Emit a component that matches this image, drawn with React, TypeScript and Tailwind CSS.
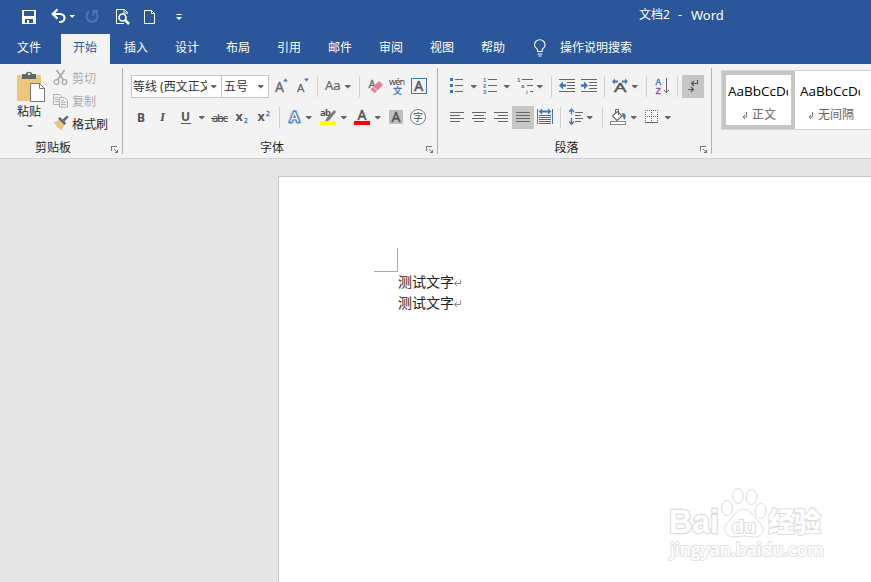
import React from "react";

const gray = "#666666";
const blue = "#3f78b5";

type IconProps = {
   w: number;
   h?: number;
   className?: string;
   crisp?: boolean;
   children?: React.ReactNode;
};

const Icon = ({ w, h = 23, className = "", crisp = false, children }: IconProps) => (
   <svg
      width={w}
      height={h}
      viewBox={`0 0 ${w} ${h}`}
      fill="none"
      shapeRendering={crisp ? "crispEdges" : "auto"}
      className={`block shrink-0 ${className}`}
   >
      {children}
   </svg>
);

const Caret = ({ className = "" }: { className?: string }) => (
   <Icon w={6} h={23} className={className}>
      <path d="M0 10h5.500v1L2.800 13.500 0 11z" fill={gray} />
   </Icon>
);

const Sep = ({ className = "" }: { className?: string }) => (
   <div className={`w-px h-[21px] mt-px shrink-0 bg-[#d0d0d0] ${className}`}></div>
);

const Launcher = () => (
   <Icon w={8} h={8} crisp className="absolute right-[3px] bottom-0">
      <path d="M0.5 5V0.5H6M3 3l3 3" stroke="#777" />
      <path d="M7 3v4H3z" fill="#777" />
   </Icon>
);

const Group = ({ title, className, children }: { title: string; className: string; children: React.ReactNode }) => (
   <div className={`relative flex flex-col h-[86px] mt-1 shrink-0 border-r border-[#b1b1b1] ${className}`}>
      <div className="h-[70px]">{children}</div>
      <div className="h-4 pr-4 text-center leading-[19px] text-[#262626]">{title}</div>
      <Launcher />
   </div>
);

const Lines = ({ rows }: { rows: number[][] }) => (
   <>
      {rows.map(([x, y, w], i) => (
         <rect key={i} x={x} y={y} width={w} height={1} fill={gray} />
      ))}
   </>
);

const tabs = ["插入", "设计", "布局", "引用", "邮件", "审阅", "视图", "帮助"];

const TitleBar = () => (
   <div className="flex h-[34px] text-white">
      <Icon w={14} h={34} crisp className="ml-[22px]">
         <path d="M0 10h14v14H0zM2 11v5h10v-5zM3 19v4h2v-3h2v3h4v-4z" fill="#fff" fillRule="evenodd" />
      </Icon>
      <Icon w={15} h={34} className="ml-[15px]">
         <path d="M1.5 14h7.5c6 0 6 8 0 8H8" stroke="#fff" strokeWidth="2.2" />
         <path d="M6.5 9.3L1.7 14l4.8 4.6" stroke="#fff" strokeWidth="2.2" />
      </Icon>
      <Icon w={6} h={34} className="ml-[3px]">
         <path d="M0.5 15h5.500L3.200 18z" fill="#fff" />
      </Icon>
      <Icon w={14} h={34} className="ml-[10px]">
         <path d="M4 11.6a5.6 5.6 0 1 0 6.5 0.2" stroke="#5377ae" strokeWidth="2" />
         <path d="M8.5 15.5V11H13" stroke="#5377ae" strokeWidth="2" />
      </Icon>
      <Icon w={15} h={34} className="ml-[16px]">
         <path d="M12.5 13.5v-1L9.5 9.500H1.500v14H9" stroke="#fff" />
         <path d="M9 9v4h4" stroke="#fff" />
         <circle cx="7.500" cy="17.500" r="3.500" stroke="#fff" strokeWidth="1.700" />
         <path d="M10 20l4 4" stroke="#fff" strokeWidth="2.500" />
      </Icon>
      <Icon w={12} h={34} className="ml-[14px]">
         <path d="M0.500 10.500h7l3 3v10h-10zM7.500 10.500v3h3" stroke="#fff" />
      </Icon>
      <Icon w={6} h={34} className="ml-[20px]">
         <path d="M0.500 14h5v1h-5zM0 17h6l-3 3z" fill="#fff" />
      </Icon>
      <div className="ml-[457px] pt-[5px] flex leading-5 text-[12.5px]">
         <span className="w-[39px] text-[12px]">文档2</span>
         <span className="w-[13px]">-</span>
         <span className="text-[13px]">Word</span>
      </div>
   </div>
);

const TabBar = () => (
   <div className="flex h-[30px] leading-[28px] text-white">
      <div className="w-[61px] pl-[17px]">文件</div>
      <div className="w-[49px] pl-3 bg-[#f3f3f3] text-[#2b579a]">开始</div>
      {tabs.map((t) => (
         <div key={t} className="w-[51px] pl-[14px]">{t}</div>
      ))}
      <Icon w={14} h={30} className="ml-[15px]">
         <path d="M4.500 17.500v-2C2.500 14 1.500 12.800 1.500 11a5.300 5.300 0 0 1 10.600 0c0 1.800-1 3-3 4.500v2z" stroke="#fff" strokeWidth="1.100" />
         <path d="M4.500 20h5M5.500 22h3" stroke="#fff" />
      </Icon>
      <div className="ml-[13px]">操作说明搜索</div>
   </div>
);

const Clipboard = () => (
   <Group title="剪贴板" className="w-[123px]">
      <div className="flex">
         <div className="w-[30px] ml-[16px] flex flex-col">
            <Icon w={30} h={35}>
               <rect x="1" y="7" width="24" height="26" rx="1" fill="#edc57c" />
               <path d="M6 11V6h4c0-3 6-3 6 0h4v5z" fill="#666" />
               <rect x="12" y="5" width="2" height="2" fill="#f3f3f3" />
               <path d="M14.500 15.500h9l5 5v13h-14z" fill="#fff" stroke="#777" />
               <path d="M23.500 15.500v5h5" stroke="#777" />
            </Icon>
            <span className="leading-[18px] ml-px whitespace-nowrap text-[#262626]">粘贴</span>
            <Icon w={6} h={6} className="ml-[11px]">
               <path d="M0 4h6L3 7z" fill={gray} />
            </Icon>
         </div>
         <div className="ml-[7px] flex flex-col leading-[21px] text-[#ababab]">
            <div className="flex h-[23px]">
               <Icon w={15} h={23}>
                  <path d="M3.500 2l7 10M11.500 2L4.500 12" stroke="#aaa" strokeWidth="1.800" />
                  <circle cx="3.500" cy="14" r="2.300" stroke="#aaa" strokeWidth="1.300" />
                  <circle cx="11.500" cy="14" r="2.300" stroke="#aaa" strokeWidth="1.300" />
               </Icon>
               <span className="ml-1">剪切</span>
            </div>
            <div className="flex h-[23px]">
               <Icon w={15} h={23}>
                  <path d="M0.500 3.500h6l2 2v8h-8z" stroke="#b8a9b8" />
                  <path d="M2 6.500h3M2 8.500h4M2 10.500h4" stroke="#b8a9b8" />
                  <path d="M6.500 6.500h5l3 3v6.500h-8z" fill="#f3f3f3" stroke="#b8a9b8" />
                  <path d="M8 9.500h3M8 11.500h5M8 13.500h5" stroke="#b8a9b8" />
               </Icon>
               <span className="ml-1">复制</span>
            </div>
            <div className="flex h-[23px] text-[#262626]">
               <Icon w={16} h={23}>
                  <path d="M0.500 8.500L7 5.500l5 5L8 16.500z" fill="#edc57c" />
                  <path d="M5 4.500l2-1.500 6 6-1.500 2z" fill="#666" />
                  <path d="M9.500 5.500l4.500-4 1.500 1.500-4 4.500z" fill="#666" />
               </Icon>
               <span className="ml-[3px]">格式刷</span>
            </div>
         </div>
      </div>
   </Group>
);

const FontGroup = () => (
   <Group title="字体" className="w-[315px]">
      <div className="flex h-[38px] pt-[7px] pl-[8px]">
         <div className="flex w-[91px] h-[23px] border border-[#c6c6c6] bg-white leading-[21px] text-[#333]">
            <div className="w-[75px] pl-px overflow-hidden whitespace-nowrap">等线 (西文正文)</div>
            <Caret className="ml-[4px] -mt-px" />
         </div>
         <div className="flex w-[47px] h-[23px] border border-l-0 border-[#c6c6c6] bg-white leading-[21px] text-[#333]">
            <div className="w-[36px] pl-[2px]">五号</div>
            <Caret className="-mt-px" />
         </div>
         <Icon w={14} className="ml-[6px]">
            <text x="0" y="17" fontSize="14" fill={gray} stroke={gray} strokeWidth="0.3">A</text>
            <path d="M8 6.500h5L10.500 3.500z" fill={blue} />
         </Icon>
         <Icon w={13} className="ml-[8px]">
            <text x="0" y="17" fontSize="11.500" fill={gray} stroke={gray} strokeWidth="0.300">A</text>
            <path d="M7 3.500h5l-2.500 3z" fill={blue} />
         </Icon>
         <Sep className="ml-[7px]" />
         <Icon w={18} className="ml-[6px]">
            <text x="1" y="15" fontSize="13" fill={gray} stroke={gray} strokeWidth="0.200">Aa</text>
         </Icon>
         <Caret className="ml-[3px]" />
         <Sep className="ml-[8px]" />
         <Icon w={17} className="ml-[8px]">
            <text x="0.500" y="13" fontSize="11" fill={gray} stroke={gray} strokeWidth="0.300">A</text>
            <path d="M3 13.500L11 6l4 4-8 8-4-3z" fill="#e57f92" />
            <path d="M5 11.500l4.500 4.500" stroke="#f3f3f3" />
         </Icon>
         <Icon w={18} className="ml-[4px]">
            <text x="0" y="10" fontSize="9" textLength="16" fill="#444">wén</text>
            <text x="4" y="19" fontSize="9" fill={blue} stroke={blue} strokeWidth="0.300">文</text>
         </Icon>
         <Icon w={16} className="ml-[4px]">
            <rect x="0.500" y="3.500" width="15" height="15" stroke={blue} />
            <text x="3.200" y="16" fontSize="14" fill="#555" stroke="#555" strokeWidth="0.500">A</text>
         </Icon>
      </div>
      <div className="flex h-[23px] pl-[13px]">
         <div className="w-[23px] leading-[23px] font-bold text-[12px] text-[#555]"><span className="ml-px">B</span></div>
         <div className="w-[22px] leading-[22px] font-semibold italic text-[#555] font-['Liberation_Serif']"><span className="ml-px text-[13px]">I</span></div>
         <Icon w={11}>
            <text x="0" y="15" fontSize="12" fontWeight="bold" fill="#555">U</text>
            <rect x="0" y="17" width="10" height="1" fill="#555" />
         </Icon>
         <Caret className="ml-[7px]" />
         <Icon w={19} className="ml-[6px]">
            <text x="1" y="16" fontSize="11" textLength="16" fill="#555" stroke="#555" strokeWidth="0.200">abc</text>
            <rect x="0" y="12" width="17" height="1" fill="#555" />
         </Icon>
         <Icon w={15} className="ml-[5px]">
            <text x="0.500" y="15" fontSize="12.500" fontWeight="bold" fill="#555">x</text>
            <text x="9" y="17" fontSize="6.500" fill={blue} stroke={blue} strokeWidth="0.300">2</text>
         </Icon>
         <Icon w={15} className="ml-[7px]">
            <text x="0.500" y="15" fontSize="12.500" fontWeight="bold" fill="#555">x</text>
            <text x="9" y="9.500" fontSize="6.500" fill={blue} stroke={blue} strokeWidth="0.300">2</text>
         </Icon>
         <Sep className="ml-[7px]" />
         <Icon w={16} className="ml-[7px]">
            <text x="3" y="16" fontSize="14" fill="#fff" stroke="#a9c9ea" strokeWidth="4.500" paintOrder="stroke" strokeLinejoin="round">A</text>
            <text x="3" y="16" fontSize="14" fill="#fff" stroke={blue} strokeWidth="2.200" paintOrder="stroke">A</text>
         </Icon>
         <Caret className="ml-[3px]" />
         <Icon w={17} className="ml-[8px]">
            <text x="0" y="10" fontSize="9.500" fontWeight="bold" textLength="11" fill="#555">ab</text>
            <path d="M14.500 4L7 11.500l-2 4 4-1L16 6z" fill="#777" />
            <rect x="0" y="15" width="16" height="4" fill="#ffff00" />
         </Icon>
         <Caret className="ml-[4px]" />
         <Icon w={17} className="ml-[7px]">
            <text x="3.500" y="14" fontSize="14" fill="#555" stroke="#555" strokeWidth="0.500">A</text>
            <rect x="0" y="15" width="16" height="4" fill="#ff0000" />
         </Icon>
         <Caret className="ml-[4px]" />
         <Icon w={14} className="ml-[8px]">
            <rect x="0" y="4" width="14" height="14" fill="#bfbfbf" />
            <text x="2.500" y="16" fontSize="14" fill="#555" stroke="#555" strokeWidth="0.500">A</text>
         </Icon>
         <Icon w={17} className="ml-[7px]">
            <circle cx="8" cy="11" r="7.500" fill="#fff" stroke="#777" />
            <text x="3" y="14.700" fontSize="10" fill="#444">字</text>
         </Icon>
      </div>
   </Group>
);

const ParagraphGroup = () => (
   <Group title="段落" className="w-[274px]">
      <div className="flex h-[38px] pt-[7px] pl-[12px]">
         <Icon w={14} crisp>
            <path d="M0 3h3v3H0zM0 9h3v3H0zM0 15h3v3H0z" fill={blue} />
            <Lines rows={[[5, 4, 8], [5, 10, 8], [5, 16, 8]]} />
         </Icon>
         <Caret className="ml-[7px]" />
         <Icon w={15} className="ml-[6px]">
            <g fontSize="6" fontWeight="bold" fill={blue} fontFamily="Liberation Sans">
               <text x="0" y="6.500">1</text>
               <text x="0" y="12.500">2</text>
               <text x="0" y="18.500">3</text>
            </g>
            <Lines rows={[[5, 4, 9], [5, 10, 9], [5, 16, 9]]} />
         </Icon>
         <Caret className="ml-[6px]" />
         <Icon w={17} className="ml-[7px]">
            <g fontSize="6" fontWeight="bold" fill={blue} fontFamily="Liberation Sans">
               <text x="0" y="6.500">1</text>
               <text x="4" y="12.500">a</text>
               <text x="9" y="18.500">i</text>
            </g>
            <Lines rows={[[5, 4, 11], [10, 10, 6], [13, 16, 3]]} />
         </Icon>
         <Caret className="ml-[3px]" />
         <Sep className="ml-[8px]" />
         <Icon w={16} className="ml-[7px]">
            <Lines rows={[[0, 4, 16], [8, 7, 8], [8, 10, 8], [8, 13, 8], [0, 16, 16]]} />
            <path d="M0 10.500L4 6.500v2.800h3v2.400H4v2.800z" fill={blue} />
         </Icon>
         <Icon w={16} className="ml-[6px]">
            <Lines rows={[[0, 4, 16], [8, 7, 8], [8, 10, 8], [8, 13, 8], [0, 16, 16]]} />
            <path d="M7 10.500L3 6.500v2.800H0v2.400h3v2.800z" fill={blue} />
         </Icon>
         <Sep className="ml-[7px]" />
         <Icon w={17} className="ml-[7px]">
            <path d="M0 6.500l3-3v2h3v2H3v2zM16 6.500l-3-3v2h-3v2h3v2z" fill={blue} />
            <text x="2" y="17" fontSize="12" textLength="12.500" lengthAdjust="spacingAndGlyphs" fill="#555" stroke="#555" strokeWidth="0.400">A</text>
         </Icon>
         <Caret className="ml-[3px]" />
         <Sep className="ml-[8px]" />
         <Icon w={15} className="ml-[8px]">
            <text x="0.500" y="9.500" fontSize="8.500" fill={blue} stroke={blue} strokeWidth="0.400" fontFamily="Liberation Sans">A</text>
            <text x="0.800" y="18.500" fontSize="8.500" fill="#8b55ad" stroke="#8b55ad" strokeWidth="0.400" fontFamily="Liberation Sans">Z</text>
            <path d="M11.500 3v14.500M9 15l2.500 2.700L14 15" stroke={gray} />
         </Icon>
         <Sep className="ml-[7px]" />
         <div className="w-[22px] h-[23px] ml-[4px] bg-[#c6c6c6]">
            <Icon w={22}>
               <path d="M15.500 5v3.500H9.500M12 6L9.500 8.500 12 11" stroke="#555" strokeWidth="1.200" />
               <path d="M6 14.500h5M9 12l2.500 2.500L9 17" stroke="#555" strokeWidth="1.200" />
            </Icon>
         </div>
      </div>
      <div className="flex h-[23px] pl-[12px]">
         <Icon w={14} crisp><Lines rows={[[0, 6, 14], [0, 9, 10], [0, 12, 14], [0, 15, 10]]} /></Icon>
         <Icon w={14} crisp className="ml-[8px]"><Lines rows={[[0, 6, 14], [2, 9, 10], [0, 12, 14], [2, 15, 10]]} /></Icon>
         <Icon w={14} crisp className="ml-[8px]"><Lines rows={[[0, 6, 14], [4, 9, 10], [0, 12, 14], [4, 15, 10]]} /></Icon>
         <div className="w-[22px] h-[23px] ml-[4px] pl-[4px] bg-[#c6c6c6]">
            <Icon w={14} crisp><Lines rows={[[0, 6, 14], [0, 9, 14], [0, 12, 14], [0, 15, 14]]} /></Icon>
         </div>
         <Icon w={16} className="ml-[3px]">
            <path d="M0 3h1v15H0zM15 3h1v15h-1zM1.500 5.500L5 2.500v2h6v-2l3.500 3-3.500 3v-2H5v2z" fill={blue} />
            <Lines rows={[[2, 9, 12], [2, 11, 12], [2, 13, 12], [2, 15, 12], [2, 17, 12]]} />
         </Icon>
         <Sep className="ml-[7px]" />
         <Icon w={15} className="ml-[8px]">
            <path d="M2.500 3.500v5M0 6l2.500-2.700L5 6M2.500 12v6M0 15.500l2.500 2.700L5 15.500" stroke={blue} strokeWidth="1.300" />
            <Lines rows={[[6, 6, 8], [6, 9, 6], [6, 12, 8], [6, 15, 6]]} />
         </Icon>
         <Caret className="ml-[3px]" />
         <Sep className="ml-[9px]" />
         <Icon w={17} className="ml-[7px]">
            <path d="M2.500 10l5-4.500 4.500 4.500-5 4.500z" fill="#fff" stroke={gray} strokeWidth="1.100" />
            <path d="M5.500 8V3.500h3V9" stroke={gray} />
            <path d="M12 7c4 0 4.500 3 2.500 7l-2-4z" fill={blue} />
            <rect x="0.500" y="15.500" width="15" height="3" fill="#fff" stroke="#888" />
         </Icon>
         <Caret className="ml-[4px]" />
         <Icon w={13} crisp className="ml-[8px]">
            <rect x="0" y="4" width="13" height="13" fill="#fff" />
            <path d="M0 4.500h13M0 10.500h13M0.500 4v12M6.500 4v12M12.500 4v12" stroke={gray} strokeDasharray="1 1" />
            <rect x="0" y="16" width="13" height="1" fill={gray} />
         </Icon>
         <Caret className="ml-[7px]" />
      </div>
   </Group>
);

const StyleCard = ({ name, active }: { name: string; active?: boolean }) => (
   <div className={`w-[73px] h-[58px] shrink-0 border-4 ${active ? "border-[#c6c6c6]" : "border-transparent -ml-px"}`}>
      <div className="w-[62px] pl-[2px] pt-[6px] overflow-hidden whitespace-nowrap text-[13.5px] leading-[20px] text-black font-['Open_Sans','Noto_Sans_CJK_SC',sans-serif]">
         AaBbCcDd
      </div>
      <div className="flex justify-center pl-px leading-[27px] text-[#666] whitespace-nowrap">
         <Icon w={6} h={22} className="mr-[4px]">
            <path d="M4.500 11v5H1M3 14l-2 2 2 2" stroke="#777" />
         </Icon>
         {name}
      </div>
   </div>
);

const Styles = () => (
   <div className="flex w-[150px] h-[60px] mt-[6px] ml-[9px] overflow-hidden border border-r-0 border-[#d2d2d2] bg-white">
      <StyleCard name="正文" active />
      <StyleCard name="无间隔" />
   </div>
);

const ReturnMark = () => (
   <Icon w={8} h={20}>
      <path d="M6.500 7.500v4H0.500M3 9L0.500 11.500 3 14" stroke="#888" />
   </Icon>
);

const Watermark = () => (
   <div className="absolute left-[389px] top-[310px] w-[160px] text-white">
      <div className="flex h-[54px] items-end">
         <svg width="52" height="40" viewBox="0 0 52 40" className="shrink-0">
            <text
               x="1" y="32" fontSize="34" fontWeight="bold" textLength="50" lengthAdjust="spacingAndGlyphs"
               fill="#fff" stroke="#dcdcdc" strokeWidth="2.500" strokeLinejoin="round" paintOrder="stroke" fontFamily="Liberation Sans"
            >
               Bai
            </text>
         </svg>
         <svg width="48" height="54" viewBox="0 0 48 54" fill="#fff" stroke="#dcdcdc" className="shrink-0">
            <ellipse cx="7" cy="21" rx="5.500" ry="7.500" />
            <ellipse cx="18" cy="9" rx="5.500" ry="7.500" />
            <ellipse cx="31.500" cy="10" rx="5.500" ry="7.500" />
            <ellipse cx="40.500" cy="24" rx="5.500" ry="7.500" />
            <path d="M24 22c7 0 9 7 14 12 8 7 6 15-3 16-5 0-7-1-11-1s-6 1-11 1c-9-1-11-9-4-16 5-5 8-12 15-12z" />
            <text
               x="12" y="46" fontSize="19" fontWeight="bold" textLength="24" lengthAdjust="spacingAndGlyphs"
               strokeWidth="2" paintOrder="stroke" fontFamily="Liberation Sans"
            >
               du
            </text>
         </svg>
         <svg width="56" height="40" viewBox="0 0 56 40" className="shrink-0">
            <text
               x="0" y="31" fontSize="27" fontWeight="900" textLength="53" fill="#fff" stroke="#dcdcdc"
               strokeWidth="2" strokeLinejoin="round" paintOrder="stroke"
            >
               经验
            </text>
         </svg>
      </div>
      <svg width="160" height="26" viewBox="0 0 160 26" className="block">
         <text
            x="2" y="15" fontSize="17.500" fontWeight="600" textLength="154" fill="#fff" stroke="#e2e2e2"
            strokeWidth="2" strokeLinejoin="round" paintOrder="stroke" fontFamily="Open Sans"
         >
            jingyan.baidu.com
         </text>
      </svg>
   </div>
);

const App = () => {
   return (
      <div className="flex flex-col w-full h-[582px] overflow-hidden bg-[#e6e6e6] text-[12px] font-['Noto_Sans','Noto_Sans_CJK_SC',sans-serif]">
         <div className="shrink-0 bg-[#2b579a]">
            <TitleBar />
            <TabBar />
         </div>
         <div className="flex h-[95px] shrink-0 border-b border-[#d2d2d2] bg-[#f3f3f3]">
            <Clipboard />
            <FontGroup />
            <ParagraphGroup />
            <Styles />
         </div>
         <div className="relative flex-1 mt-[17px] ml-[278px] border-l border-t border-[#c6c6c6] bg-white">
            <div className="w-6 h-6 mt-[71px] ml-[95px] border-r border-b border-[#ababab]"></div>
            <div className="ml-[119px] leading-[20px] text-[14px] text-[#222]">
               <div className="flex h-[21px]">测试文字<ReturnMark /></div>
               <div className="flex h-[21px]">测试文字<ReturnMark /></div>
            </div>
            <Watermark />
         </div>
      </div>
   );
};

export default App;
